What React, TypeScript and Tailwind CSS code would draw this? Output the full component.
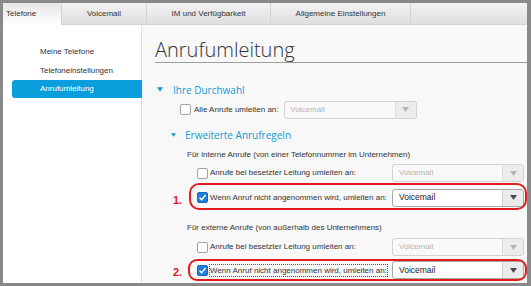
import React from "react";

const Caret = ({ w = 7, h = 5 }: { w?: number; h?: number }) => (
  <svg width={w} height={h} viewBox="0 0 7 5">
    <polygon points="0,0 7,0 3.5,5" fill="currentColor" />
  </svg>
);

function Checkbox({ checked }: { checked?: boolean }) {
  if (checked) {
    return (
      <span className="w-[11px] h-[11px] rounded-[2px] bg-[#1f80d9] border border-[#1769b8] flex items-center justify-center shrink-0">
        <svg width="9" height="9" viewBox="0 0 9 9">
          <path d="M1.6 4.7 L3.6 6.7 L7.6 2.1" stroke="white" strokeWidth="1.5" fill="none" />
        </svg>
      </span>
    );
  }
  return <span className="w-[11px] h-[11px] rounded-[2px] bg-white border border-[#a3a3a3] shrink-0" />;
}

function Select({ enabled, className = "" }: { enabled?: boolean; className?: string }) {
  return (
    <div
      className={`h-[18px] flex rounded-[3px] border overflow-hidden ${
        enabled ? "border-[#a8a8a8] bg-white" : "border-[#d2d2d2] bg-[#f9f9f9]"
      } ${className}`}
    >
      <div
        className={`flex-1 flex items-center pl-[6px] ${
          enabled ? "text-[#222] text-[8.5px]" : "text-[#b3b3b3] text-[8px]"
        }`}
      >
        Voicemail
      </div>
      <div
        className={`w-[21px] flex items-center justify-center border-l ${
          enabled ? "border-[#cfcfcf] bg-[#ebebeb] text-[#4a4a4a]" : "border-[#dddddd] bg-[#ececec] text-[#b5b5b5]"
        }`}
      >
        <Caret />
      </div>
    </div>
  );
}

export default function App() {
  return (
    <div
      className="w-[531px] h-[286px] bg-[#898989] pt-[3px] pl-[3px] pr-[4px] pb-[3px] text-[#333] text-[8px]"
      style={{ fontFamily: '"Liberation Sans", Arial, sans-serif' }}
    >
      <div className="w-full h-full flex flex-col bg-white overflow-hidden">
        {/* Tabs */}
        <div className="h-[22px] flex shrink-0">
          <div className="w-[58px] flex items-center pl-[3px] bg-gradient-to-b from-[#e6e6e6] to-white text-[#333]">
            Telefone
          </div>
          <div className="w-[85px] flex items-center justify-center border-l border-b border-[#d3d3d3] bg-gradient-to-b from-[#f3f3f3] to-[#dedede]">
            Voicemail
          </div>
          <div className="w-[124px] flex items-center justify-center border-l border-b border-[#d3d3d3] bg-gradient-to-b from-[#f3f3f3] to-[#dedede]">
            IM und Verfügbarkeit
          </div>
          <div className="w-[140px] flex items-center justify-center border-l border-b border-[#d3d3d3] bg-gradient-to-b from-[#f3f3f3] to-[#dedede]">
            Allgemeine Einstellungen
          </div>
          <div className="flex-1 border-l border-b border-[#d3d3d3] bg-gradient-to-b from-[#f3f3f3] to-[#dedede]" />
        </div>

        {/* Body */}
        <div className="flex-1 flex">
          {/* Sidebar */}
          <div className="w-[139px] shrink-0 bg-white border-r border-[#e0e0e0] pt-[17px] flex flex-col">
            <div className="h-[19px] flex items-center pl-[37px]">Meine Telefone</div>
            <div className="h-[19px] flex items-center pl-[37px]">Telefoneinstellungen</div>
            <div className="h-[18px] flex items-center pl-[28px] ml-[9px] mr-[-1px] bg-[#0a9fdc] text-white rounded-l-[3px]">
              Anrufumleitung
            </div>
          </div>

          {/* Main */}
          <div className="flex-1 relative bg-[#f8f8f8] pl-[13px] flex flex-col">
            <div
              className="pt-[12px] text-[20px] leading-[25px] font-light text-[#333] border-b border-[#9c9c9c]"
              style={{ fontFamily: '"Open Sans", "Noto Sans", sans-serif' }}
            >
              Anrufumleitung
            </div>

            <div
              className="mt-[17px] h-[20px] flex items-center text-[#0d9bd8] text-[10px]"
              style={{ fontFamily: '"Open Sans", "Noto Sans", sans-serif' }}
            >
              <span className="ml-[2px] mr-[10px] mt-[-2px]">
                <Caret w={6} h={5} />
              </span>
              Ihre Durchwahl
            </div>

            <div className="h-[19px] flex items-center pl-[25px]">
              <Checkbox />
              <span className="ml-[3px]">Alle Anrufe umleiten an:</span>
              <Select className="ml-[5px] w-[133px]" />
            </div>

            <div
              className="mt-[6px] h-[20px] flex items-center text-[#0d9bd8] text-[10px]"
              style={{ fontFamily: '"Open Sans", "Noto Sans", sans-serif' }}
            >
              <span className="ml-[16px] mr-[9px] mt-[-1px]">
                <Caret w={5} h={4} />
              </span>
              Erweiterte Anrufregeln
            </div>

            <div className="h-[19px] flex items-center pl-[32px]">
              Für interne Anrufe (von einer Telefonnummer im Unternehmen)
            </div>

            <div className="h-[18px] flex items-center pl-[42px]">
              <Checkbox />
              <span className="ml-[2px]">Anrufe bei besetzter Leitung umleiten an:</span>
              <Select className="ml-auto mr-[3px] w-[132px]" />
            </div>

            <div className="mt-[6px] h-[19px] flex items-center pl-[42px]">
              <Checkbox checked />
              <span className="ml-[2px]">Wenn Anruf nicht angenommen wird, umleiten an:</span>
              <Select enabled className="ml-auto mr-[3px] w-[132px]" />
            </div>

            <div className="mt-[11px] h-[19px] flex items-center pl-[32px]">
              Für externe Anrufe (von außerhalb des Unternehmens)
            </div>

            <div className="mt-[1px] h-[18px] flex items-center pl-[42px]">
              <Checkbox />
              <span className="ml-[2px]">Anrufe bei besetzter Leitung umleiten an:</span>
              <Select className="ml-auto mr-[3px] w-[132px]" />
            </div>

            <div className="mt-[5px] h-[18px] flex items-center pl-[42px]">
              <Checkbox checked />
              <span className="ml-[2px] outline outline-1 outline-dotted outline-[#555] leading-[11px]">
                Wenn Anruf nicht angenommen wird, umleiten an:
              </span>
              <Select enabled className="ml-auto mr-[3px] w-[132px]" />
            </div>

            {/* annotations */}
            <div className="absolute left-[47px] top-[158px] w-[338px] h-[27px] border-2 border-[#e11c1c] rounded-[10px] pointer-events-none" />
            <div className="absolute left-[46px] top-[234px] w-[339px] h-[22px] border-2 border-[#e11c1c] rounded-[9px] pointer-events-none" />
            <div className="absolute left-[31px] top-[167px] text-[11px] font-bold text-[#e11c1c]">1.</div>
            <div className="absolute left-[31px] top-[239px] text-[11px] font-bold text-[#e11c1c]">2.</div>
          </div>
        </div>
      </div>
    </div>
  );
}
